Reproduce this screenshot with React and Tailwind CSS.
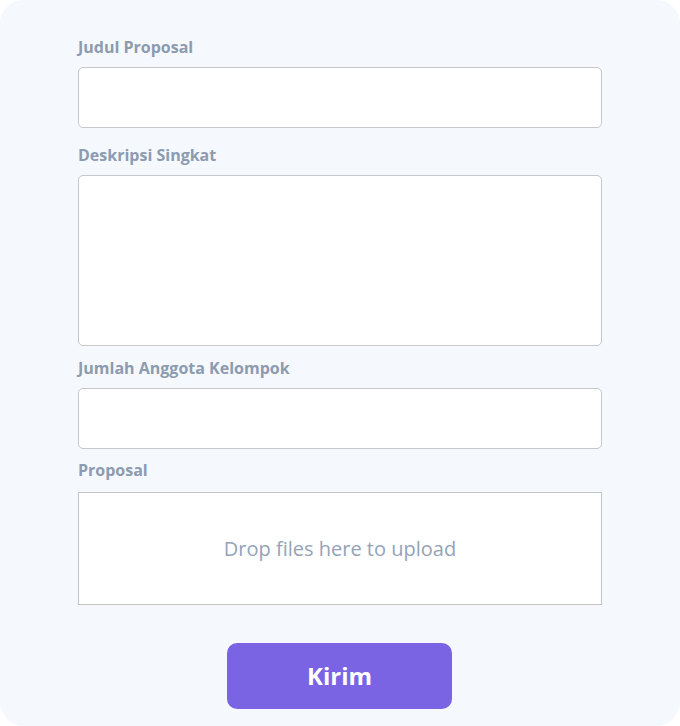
export default function App() {
  const label = "block text-[16px] font-bold leading-5 text-[#8c9bb0]";
  return (
    <div className="min-h-[726px] w-[680px] bg-white" style={{ fontFamily: '"Open Sans", sans-serif' }}>
      <div className="h-[726px] w-[680px] rounded-[24px] bg-[#f5f8fc] pl-[78px] pr-[78px] pt-[37px]">
        <label className={label}>Judul Proposal</label>
        <div className="mt-[10px] h-[61px] rounded-[5px] border border-[#c6c8cc] bg-white" />
        <label className={label + " mt-[17px]"}>Deskripsi Singkat</label>
        <div className="mt-[10px] h-[171px] rounded-[5px] border border-[#c6c8cc] bg-white" />
        <label className={label + " mt-[12px]"}>Jumlah Anggota Kelompok</label>
        <div className="mt-[10px] h-[61px] rounded-[5px] border border-[#c6c8cc] bg-white" />
        <label className={label + " mt-[11px]"}>Proposal</label>
        <div className="mt-[12px] flex h-[113px] items-center justify-center border border-[#c4c4c4] bg-white">
          <span className="text-[20px] text-[#94a3b8]">Drop files here to upload</span>
        </div>
        <div className="mt-[38px] flex justify-center">
          <button className="-ml-[1px] h-[66px] w-[225px] rounded-[10px] bg-[#7b64e3] text-[24px] font-bold text-white">
            Kirim
          </button>
        </div>
      </div>
    </div>
  );
}
